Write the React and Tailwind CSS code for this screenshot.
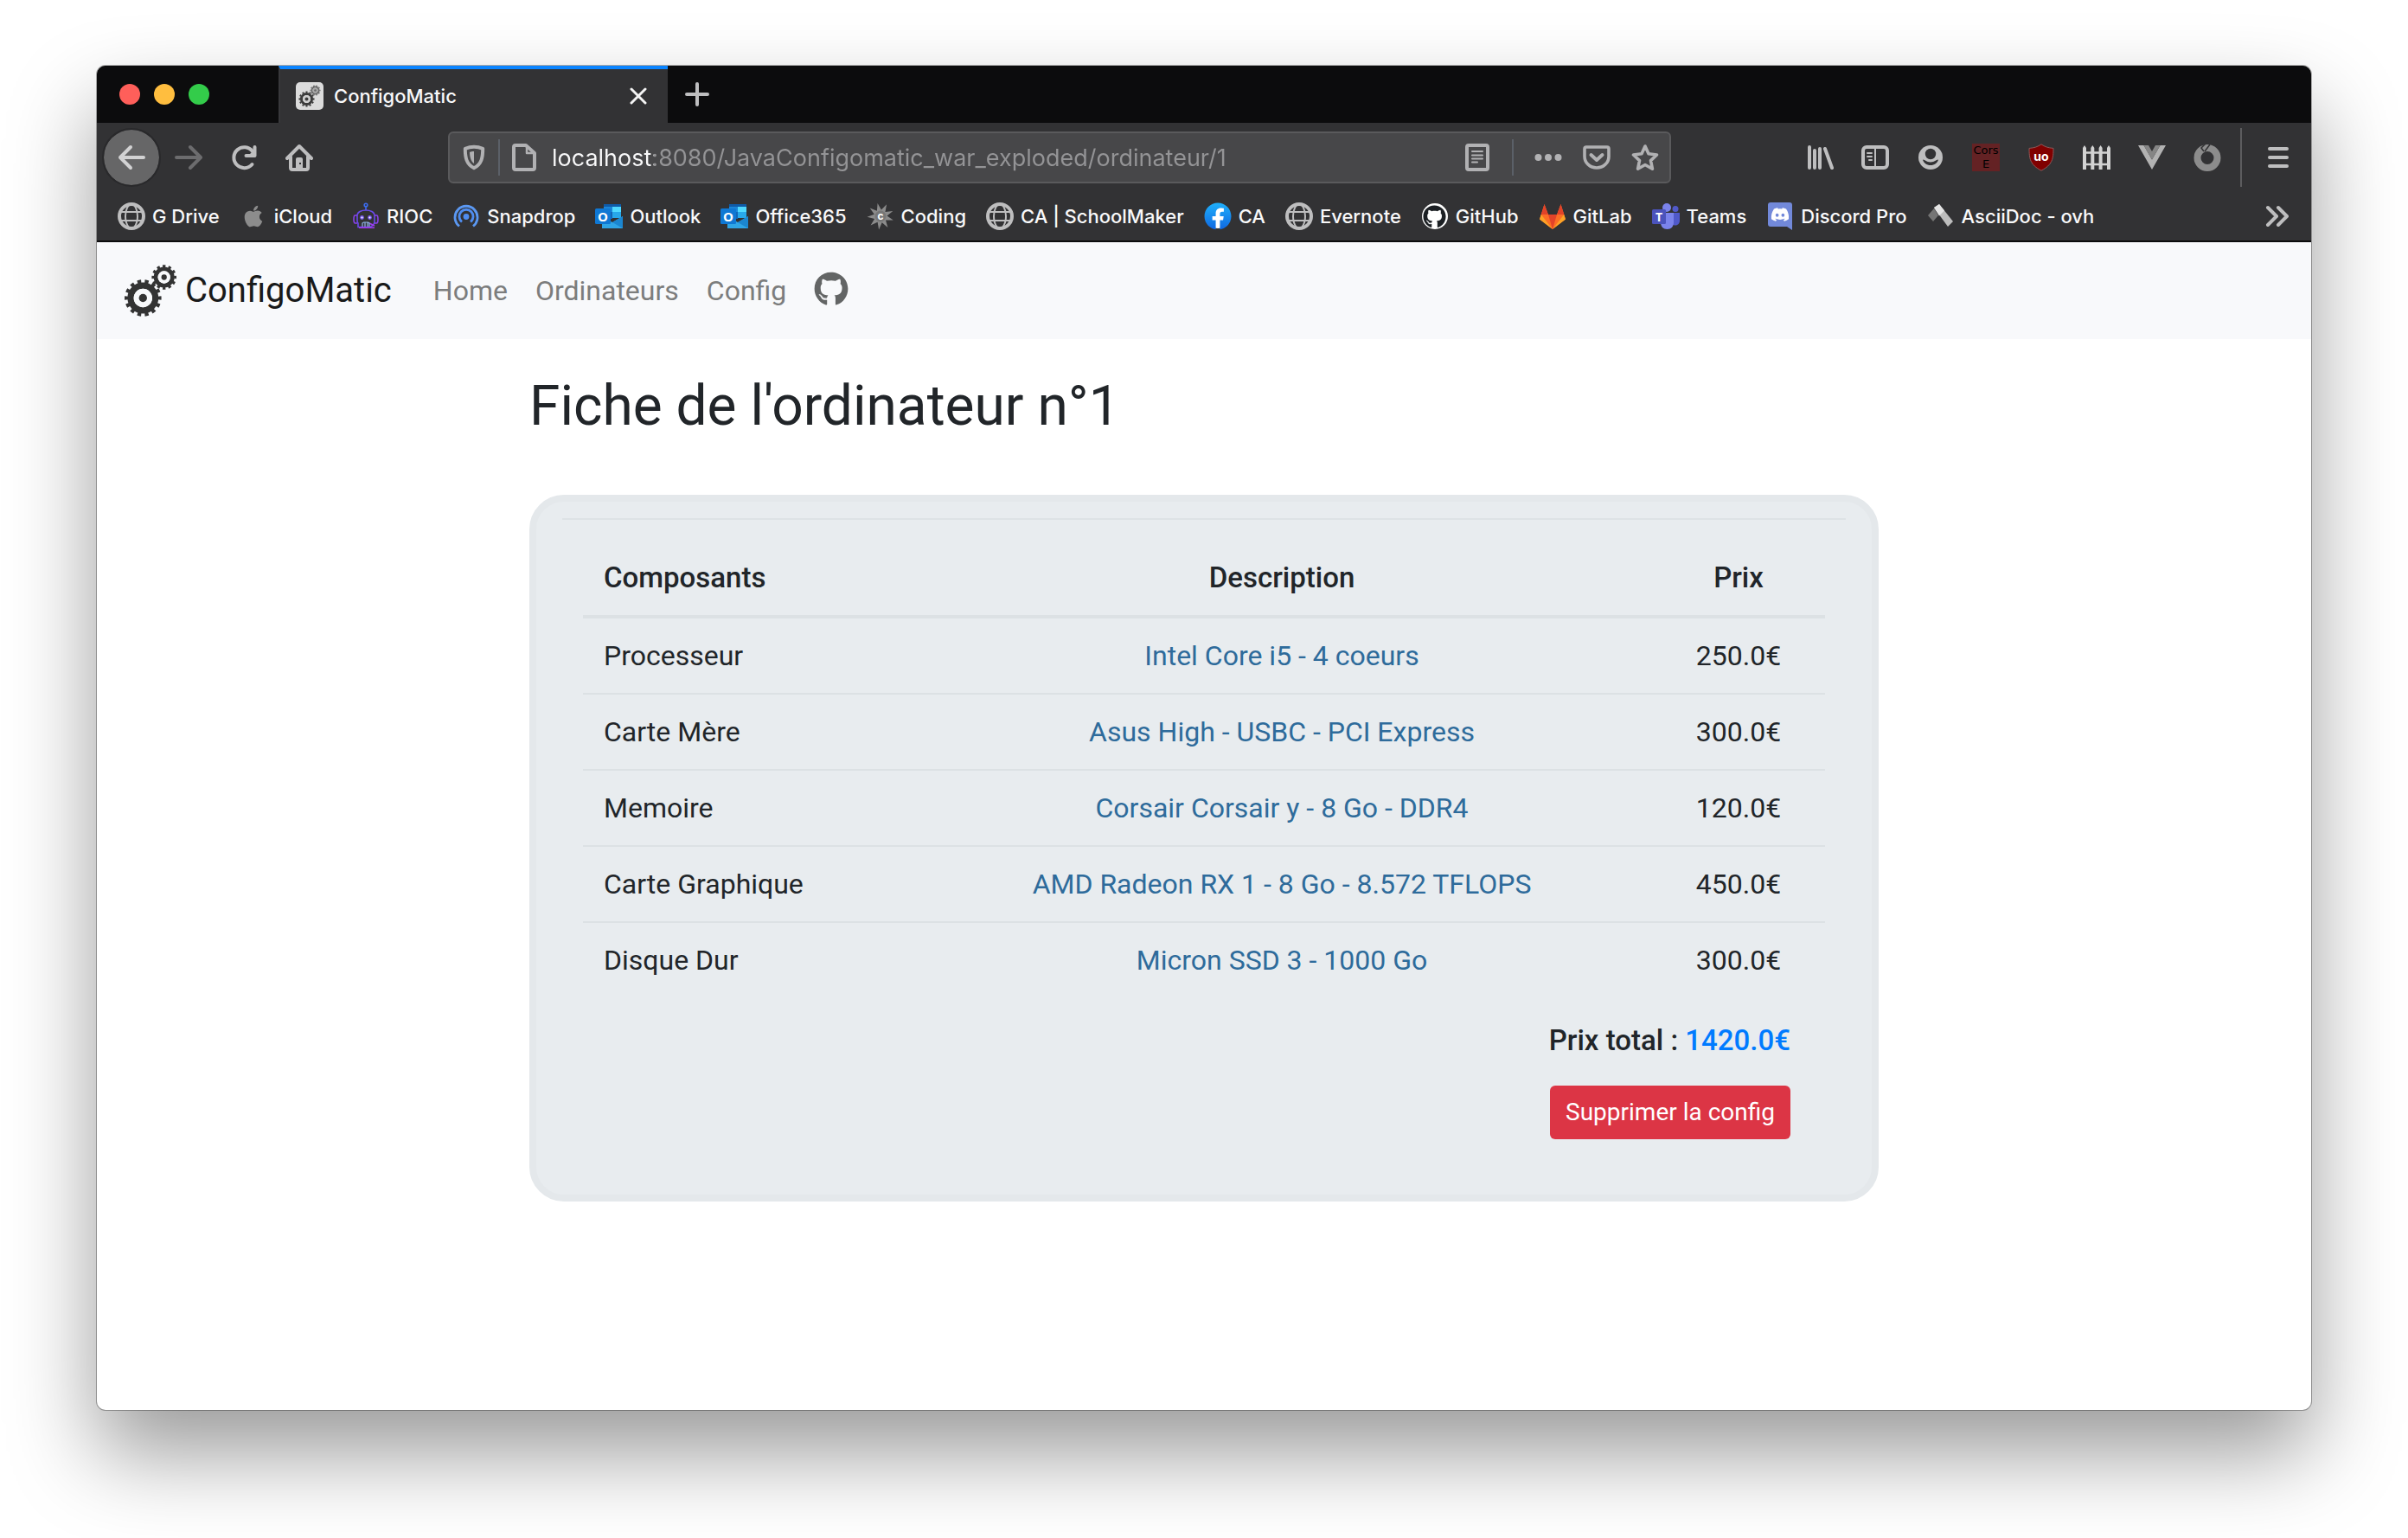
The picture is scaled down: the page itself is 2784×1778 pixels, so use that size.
import { FaApple, FaGithub, FaFacebook, FaDiscord } from "react-icons/fa";

const STROKE = {
  fill: "none",
  stroke: "currentColor",
  strokeWidth: 4,
  strokeLinecap: "round",
  strokeLinejoin: "round",
};

function Icon({ children, className = "" }) {
  return (
    <svg viewBox="0 0 32 32" className={"h-8 w-8 shrink-0 " + className} aria-hidden="true">
      {children}
    </svg>
  );
}

/* ---------- gears ---------- */

function Gear({ cx, cy, r, teeth, color, hole }) {
  return (
    <g>
      <circle
        cx={cx}
        cy={cy}
        r={r * 0.9}
        fill="none"
        stroke={color}
        strokeWidth={r * 0.2}
        pathLength={teeth * 2}
        strokeDasharray="1 1"
        strokeDashoffset="0.5"
      />
      <circle cx={cx} cy={cy} r={r * 0.67} fill="none" stroke={color} strokeWidth={r * 0.34} />
      <circle cx={cx} cy={cy} r={r * 0.5} fill={hole} />
      <circle cx={cx} cy={cy} r={r * 0.22} fill={color} />
    </g>
  );
}

function GearsLogo() {
  return (
    <svg viewBox="0 0 60 60" className="h-15 w-15 shrink-0" aria-hidden="true">
      <Gear cx={21.3} cy={38.5} r={21.3} teeth={14} color="#333333" hole="#f8f9fb" />
      <Gear cx={45.7} cy={14.5} r={14.3} teeth={12} color="#333333" hole="#f8f9fb" />
    </svg>
  );
}

function Favicon() {
  return (
    <Icon>
      <rect width="32" height="32" rx="5" fill="#dcdcdc" />
      <Gear cx={12.5} cy={19.5} r={9} teeth={12} color="#3c3c3c" hole="#cfcfcf" />
      <Gear cx={22.5} cy={9.5} r={6} teeth={10} color="#6a6a6a" hole="#a8a8a8" />
    </Icon>
  );
}

/* ---------- bookmark icons ---------- */

function Globe() {
  return (
    <Icon className="text-[#bebebf]">
      <g fill="none" stroke="currentColor">
        <circle cx="16" cy="16" r="14" strokeWidth="4" />
        <ellipse cx="16" cy="16" rx="7" ry="14" strokeWidth="2" />
        <path d="M3 11h26M3 21h26" strokeWidth="2" />
      </g>
    </Icon>
  );
}

function Apple() {
  return (
    <span className="flex h-8 w-8 items-center justify-center">
      <FaApple className="h-7 w-7 text-[#8c8c8c]" />
    </span>
  );
}

function Robot() {
  return (
    <Icon>
      <g fill="none" stroke="#5a50e8" strokeWidth="1.6">
        <circle cx="16" cy="3" r="1.8" stroke="#3b6cf0" />
        <path d="M16 5v4" stroke="#3b6cf0" />
        <path d="M6 15c0-8 20-8 20 0v7c0 3-2 5-5 6.500H7V24c-1-1-1-2-1-3z" stroke="#6a4aea" />
        <path d="M6 15H3.500c-2 0-2 9 0 9H6M26 15h2.500c2 0 2 9 0 9H26" stroke="#8a42ea" />
        <path d="M8 29.200h18M20 24l6 3" stroke="#a33bea" />
        <path d="M12 28v-4l1.500-1h5L20 24v4M15 28v-5M18 28v-5" stroke="#8fb4e8" strokeWidth="1.2" />
      </g>
      <circle cx="11.500" cy="17.500" r="2.400" fill="#7a5cf0" />
      <circle cx="20.500" cy="17.500" r="2.400" fill="#7a5cf0" />
      <circle cx="11.500" cy="17.500" r="1" fill="#ffffff" />
      <circle cx="20.500" cy="17.500" r="1" fill="#ffffff" />
    </Icon>
  );
}

function Snapdrop() {
  return (
    <Icon>
      <g fill="none" stroke="#4f8df0" strokeWidth="2.8">
        <path d="M8 27.500A13 13 0 1 1 24 27.500" stroke="#5b98f2" />
        <path d="M11 22.500A8 8 0 1 1 21 22.500" />
      </g>
      <circle cx="16" cy="16.500" r="3.400" fill="#4f8df0" />
    </Icon>
  );
}

function Outlook() {
  return (
    <Icon>
      <path d="M10 2h20v14H10z" fill="#0f5ba8" />
      <path d="M10 5h10v12H10z" fill="#1b86d8" />
      <path d="M20 5h10v6H20z" fill="#50d9ff" />
      <path d="M20 11h10v7H20z" fill="#28a8ea" />
      <path d="M10 11h10v8H10z" fill="#1266b8" />
      <path d="M8 16l12 7 12-7v14H8z" fill="#2fa5e6" />
      <path d="M20 23l12-7v14z" fill="#1b86d0" />
      <rect x="0" y="7" width="18" height="18" rx="1.500" fill="#0f78d4" />
      <text
        x="9"
        y="21.500"
        fontSize="15"
        fontWeight="700"
        textAnchor="middle"
        fill="#ffffff"
        fontFamily="Open Sans, sans-serif"
      >
        O
      </text>
    </Icon>
  );
}

const SPIKES = Array.from({ length: 18 }, (_, i) => {
  const a = (i * Math.PI) / 9 + 0.3;
  const r = i % 2 ? 7.5 : 15.5;
  return `${(16 + r * Math.cos(a)).toFixed(1)},${(16 + r * Math.sin(a)).toFixed(1)}`;
}).join(" ");

function Coding() {
  return (
    <Icon>
      <polygon points={SPIKES} fill="#8b8b8b" />
      <circle cx="16" cy="16" r="6.500" fill="#777777" />
      <text
        x="16"
        y="20"
        fontSize="12"
        fontWeight="700"
        textAnchor="middle"
        fill="#ffffff"
        fontFamily="Inter, sans-serif"
      >
        c
      </text>
    </Icon>
  );
}

function Facebook() {
  return (
    <Icon>
      <defs>
        <linearGradient id="facebook" x1="0" y1="0" x2="0" y2="1">
          <stop offset="0" stopColor="#1fb0fb" />
          <stop offset="1" stopColor="#0f68e2" />
        </linearGradient>
      </defs>
      <circle cx="16" cy="16" r="14" fill="#ffffff" />
      <FaFacebook size={32} fill="url(#facebook)" />
    </Icon>
  );
}

function GitHubMark() {
  return (
    <span className="flex h-8 w-8 items-center justify-center">
      <span className="flex h-[30px] w-[30px] items-center justify-center rounded-full bg-white">
        <FaGithub className="h-[27px] w-[27px] text-[#1b1f23]" />
      </span>
    </span>
  );
}

function GitLabMark() {
  return (
    <Icon>
      <path d="M16 31L1 19.500 6.500 2l4.500 12h10l4.500-12L31 19.500z" fill="#fc6d26" />
      <path d="M16 31L11 14h10z" fill="#e24329" />
      <path d="M6.500 2L11 14H2.800zM25.500 2L21 14h8.200z" fill="#e24329" />
      <path d="M1 19.500L2.800 14 16 31zM31 19.500L29.200 14 16 31z" fill="#fca326" />
    </Icon>
  );
}

function TeamsMark() {
  return (
    <Icon>
      <circle cx="17" cy="6" r="5" fill="#7b83eb" />
      <circle cx="27" cy="7.500" r="3.500" fill="#5059c9" />
      <path d="M22 12h10v9c0 3-2 5.500-5 5.500s-5-2-5-5z" fill="#5059c9" />
      <path d="M10 12h15v11c0 5-3 8-7.500 8S10 28 10 23z" fill="#7b83eb" />
      <rect x="0" y="8" width="16" height="17" rx="1.500" fill="#4b53bc" />
      <text
        x="8"
        y="21.500"
        fontSize="14"
        fontWeight="700"
        textAnchor="middle"
        fill="#ffffff"
        fontFamily="Open Sans, sans-serif"
      >
        T
      </text>
    </Icon>
  );
}

function DiscordMark() {
  return (
    <Icon>
      <path d="M5 0h22a3 3 0 0 1 3 3v29l-6-4H5a3 3 0 0 1-3-3V3a3 3 0 0 1 3-3z" fill="#7289da" />
      <FaDiscord x="5" y="3" size={22} fill="#ffffff" />
    </Icon>
  );
}

function AsciiDocMark() {
  return (
    <Icon>
      <path d="M1 15l7-8 5 8-6 7z" fill="#757575" />
      <path d="M8 6l6-4 16 20-6 6z" fill="#bdbdbd" />
      <path d="M8 6l6-4 6 7.500-6 6z" fill="#e4e4e4" />
    </Icon>
  );
}

const BOOKMARKS = [
  ["G Drive", Globe],
  ["iCloud", Apple],
  ["RIOC", Robot],
  ["Snapdrop", Snapdrop],
  ["Outlook", Outlook],
  ["Office365", Outlook],
  ["Coding", Coding],
  ["CA | SchoolMaker", Globe],
  ["CA", Facebook],
  ["Evernote", Globe],
  ["GitHub", GitHubMark],
  ["GitLab", GitLabMark],
  ["Teams", TeamsMark],
  ["Discord Pro", DiscordMark],
  ["AsciiDoc - ovh", AsciiDocMark],
];

/* ---------- browser chrome ---------- */

function TabStrip() {
  return (
    <div className="flex h-[66px] items-stretch bg-[#0c0c0d]">
      <div className="flex items-center gap-4 pr-20 pl-[26px]">
        <button aria-label="Fermer la fenêtre" className="h-6 w-6 rounded-full bg-[#ff5f5a]" />
        <button aria-label="Réduire" className="h-6 w-6 rounded-full bg-[#ffbe3f]" />
        <button aria-label="Agrandir" className="h-6 w-6 rounded-full bg-[#33cc4a]" />
      </div>
      <div className="flex w-[450px] items-center border-t-4 border-l-2 border-t-[#0a84ff] border-l-[#38383b] bg-[#323234] pr-6 pl-[18px]">
        <Favicon />
        <span className="ml-3 flex-1 text-[22px] font-medium text-[#f9f9fa]">ConfigoMatic</span>
        <button aria-label="Fermer l'onglet" className="h-5 w-5 text-[#f4f4f4]">
          <svg viewBox="0 0 20 20" className="h-5 w-5">
            <path d="M2 2l16 16M18 2L2 18" stroke="currentColor" strokeWidth="3" strokeLinecap="round" />
          </svg>
        </button>
      </div>
      <button aria-label="Nouvel onglet" className="ml-5 text-[#bebebf]">
        <svg viewBox="0 0 28 28" className="h-7 w-7">
          <path d="M14 2v24M2 14h24" stroke="currentColor" strokeWidth="4" strokeLinecap="round" />
        </svg>
      </button>
    </div>
  );
}

function ToolButton({ label, children, className = "text-[#bebebf]" }) {
  return (
    <button aria-label={label} className={"flex h-16 w-16 shrink-0 items-center justify-center " + className}>
      {children}
    </button>
  );
}

function UrlBar() {
  return (
    <div className="mx-[140px] flex h-15 flex-1 items-center rounded-md border-2 border-[#5a5a5c] bg-[#474749] px-3 text-[#b1b1b3]">
      <Icon>
        <path
          d="M16 3.800c4 0 7.200.8 10.200 2 0 10-1.200 18-10.200 22.400C7 23.800 5.800 15.800 5.800 5.800c3-1.200 6.200-2 10.200-2z"
          {...STROKE}
        />
        <path d="M16 9c-2 0-3.600.4-5 1 .2 6 1.400 10.400 5 13z" fill="currentColor" />
      </Icon>
      <span className="mx-3 h-[42px] w-0.5 bg-[#5b6068]" />
      <Icon>
        <path d="M6 2h12l10 9v17a2 2 0 0 1-2 2H6a2 2 0 0 1-2-2V4a2 2 0 0 1 2-2z" {...STROKE} />
        <path d="M19 3v8h8" {...STROKE} strokeWidth="2.500" />
      </Icon>
      <input
        aria-label="Adresse"
        defaultValue="localhost:8080/JavaConfigomatic_war_exploded/ordinateur/1"
        className="ml-4 h-14 min-w-0 flex-1 bg-[linear-gradient(to_right,#f9f9fa_118px,#949496_118px)] bg-clip-text text-[27px] text-transparent outline-none"
      />
      <Icon>
        <rect x="4" y="2" width="24" height="28" rx="2" {...STROKE} />
        <path d="M10 9h12M10 13.500h12M10 17.500h12M10 21.500h6" {...STROKE} strokeWidth="2" />
      </Icon>
      <span className="mx-6 h-[42px] w-0.5 bg-[#5b6068]" />
      <div className="flex gap-6">
        <Icon>
          <circle cx="4.500" cy="16" r="4" fill="currentColor" />
          <circle cx="16" cy="16" r="4" fill="currentColor" />
          <circle cx="27.500" cy="16" r="4" fill="currentColor" />
        </Icon>
        <Icon>
          <path d="M4 4h24a2 2 0 0 1 2 2v9a14 13 0 0 1-28 0V6a2 2 0 0 1 2-2z" {...STROKE} strokeWidth="3.600" />
          <path d="M9.500 13l6.500 6 6.500-6" {...STROKE} />
        </Icon>
        <Icon>
          <path
            d="M16 3l4 8.800 9.500 1.200-7 6.600 1.900 9.600L16 24.500l-8.400 4.700 1.900-9.600-7-6.600 9.500-1.200z"
            {...STROKE}
            strokeWidth="3.600"
          />
        </Icon>
      </div>
    </div>
  );
}

function Extensions() {
  return (
    <div className="flex items-center">
      <ToolButton label="Bibliothèque">
        <Icon>
          <path d="M4 4v24M10 8v20M16 6v22M22 6l8 22" {...STROKE} />
        </Icon>
      </ToolButton>
      <ToolButton label="Panneau latéral">
        <Icon>
          <rect x="2" y="4" width="28" height="24" rx="4" {...STROKE} />
          <path d="M16 4v24" stroke="currentColor" strokeWidth="2" />
          <path d="M7 11h5M7 15h5M9 19h3" {...STROKE} strokeWidth="2" />
        </Icon>
      </ToolButton>
      <ToolButton label="Compte">
        <Icon>
          <circle cx="16" cy="16" r="14" fill="currentColor" />
          <circle cx="16" cy="12" r="6.200" fill="#323234" />
          <path d="M7 18.500c3 0 4 3 9 3s6-3 9-3c-1 4-4.500 6.500-9 6.500s-8-2.500-9-6.500z" fill="#323234" />
        </Icon>
      </ToolButton>
      <ToolButton label="Cors Everywhere" className="text-black">
        <span className="h-8 w-8 bg-[#642224] text-center font-['DejaVu_Sans'] text-[13px] leading-4">
          Cors E
        </span>
      </ToolButton>
      <ToolButton label="uBlock Origin">
        <Icon>
          <path
            d="M16 .8c4 2.800 8 4.200 14 4.600 0 12-1 19-14 25.800C3 24.400 2 17.400 2 5.400 8 5 12 3.600 16 .8z"
            fill="#800000"
            stroke="#8c5a5a"
            strokeWidth="1"
          />
          <text
            x="16"
            y="19.500"
            fontSize="14"
            fontWeight="700"
            textAnchor="middle"
            fill="#ffffff"
            fontFamily="Inter, sans-serif"
          >
            uo
          </text>
        </Icon>
      </ToolButton>
      <ToolButton label="Clôture" className="text-[#d2d2d2]">
        <Icon>
          <path
            d="M0 30V5l2-3 2 3v25zM9.300 30V5l2-3 2 3v25zM18.600 30V5l2-3 2 3v25zM28 30V5l2-3 2 3v25z"
            fill="currentColor"
          />
          <path d="M0 10.500h32M0 24h32" stroke="currentColor" strokeWidth="2.600" />
        </Icon>
      </ToolButton>
      <ToolButton label="Vue">
        <Icon>
          <path d="M0 2h6.500L16 18.500 25.500 2H32L16 30z" fill="#b2b2b2" />
          <path d="M6.500 2H12l4 7 4-7h5.500L16 18.500z" fill="#858585" />
        </Icon>
      </ToolButton>
      <ToolButton label="Anneau" className="text-[#8c8c8c]">
        <Icon>
          <circle cx="16" cy="16.500" r="11.500" fill="none" stroke="currentColor" strokeWidth="8" />
          <path d="M14 0L9 5l3 4M19 1l-6 8" fill="none" stroke="#323234" strokeWidth="1.500" />
        </Icon>
      </ToolButton>
      <span className="mr-2.5 ml-1.5 h-[68px] w-0.5 bg-[#5c5c5e]" />
      <ToolButton label="Menu">
        <Icon>
          <path d="M6 6h20M6 16h20M6 26h20" {...STROKE} />
        </Icon>
      </ToolButton>
    </div>
  );
}

function NavRow() {
  return (
    <div className="flex h-20 items-center pr-1.5 pl-2">
      <ToolButton
        label="Page précédente"
        className="mr-0.5 rounded-full bg-[#666667] text-[#d2d2d3] outline-2 outline-[#29292b]"
      >
        <Icon>
          <path d="M30 16H3M15 4L3 16l12 12" {...STROKE} />
        </Icon>
      </ToolButton>
      <ToolButton label="Page suivante" className="text-[#6c6c6e]">
        <Icon>
          <path d="M2 16h27M18 4l12 12-12 12" {...STROKE} />
        </Icon>
      </ToolButton>
      <ToolButton label="Actualiser">
        <Icon>
          <path d="M25.500 24A12 12 0 1 1 26 9" {...STROKE} />
          <path d="M28.500 4v10h-10" {...STROKE} />
          <path d="M22 13l6-6v6z" fill="currentColor" />
        </Icon>
      </ToolButton>
      <ToolButton label="Accueil">
        <Icon>
          <path d="M2 17L16 3l14 14M6 15v13a2 2 0 0 0 2 2h16a2 2 0 0 0 2-2V15" {...STROKE} />
          <path d="M12 30V18a2 2 0 0 1 2-2h4a2 2 0 0 1 2 2v12z" fill="currentColor" />
          <rect x="16" y="22" width="2" height="2" fill="#323234" />
        </Icon>
      </ToolButton>
      <UrlBar />
      <Extensions />
    </div>
  );
}

function BookmarksBar() {
  return (
    <div className="flex h-14 items-center justify-between pr-6 pl-6">
      <nav aria-label="Marque-pages" className="flex items-center gap-[23px]">
        {BOOKMARKS.map(([label, Mark]) => (
          <a
            key={label}
            href="#"
            className="flex items-center gap-2 text-[22px] font-medium whitespace-nowrap text-[#f9f9fa]"
          >
            <Mark />
            {label}
          </a>
        ))}
      </nav>
      <button aria-label="Plus de marque-pages" className="text-[#bebebf]">
        <Icon>
          <path d="M6 6l10 10L6 26M18 6l10 10-10 10" {...STROKE} />
        </Icon>
      </button>
    </div>
  );
}

/* ---------- page ---------- */

function Navbar() {
  return (
    <header className="flex h-28 items-center bg-[#f8f9fb] px-8">
      <a href="#" className="mr-8 flex items-center gap-2.5 text-[40px] text-[#191a1a]">
        <GearsLogo />
        ConfigoMatic
      </a>
      <nav className="flex items-center text-[32px] text-[#7c7d7d]">
        <a href="#" className="px-4">Home</a>
        <a href="#" className="px-4">Ordinateurs</a>
        <a href="#" className="px-4">Config</a>
        <a href="#" className="px-4 pb-1" aria-label="GitHub">
          <FaGithub className="h-10 w-10 text-[#636565]" />
        </a>
      </nav>
    </header>
  );
}

const PARTS = [
  ["Processeur", "Intel Core i5 - 4 coeurs", "250.0€"],
  ["Carte Mère", "Asus High - USBC - PCI Express", "300.0€"],
  ["Memoire", "Corsair Corsair y - 8 Go - DDR4", "120.0€"],
  ["Carte Graphique", "AMD Radeon RX 1 - 8 Go - 8.572 TFLOPS", "450.0€"],
  ["Disque Dur", "Micron SSD 3 - 1000 Go", "300.0€"],
];

function PartsTable() {
  return (
    <table className="w-full table-fixed border-separate border-spacing-0 text-center">
      <thead className="text-[33px]">
        <tr>
          <th className="h-[90px] w-[380px] border-b-4 border-[#dce1e4] px-6 text-left font-medium">Composants</th>
          <th className="border-b-4 border-[#dce1e4] font-medium">Description</th>
          <th className="w-[200px] border-b-4 border-[#dce1e4] font-medium">Prix</th>
        </tr>
      </thead>
      <tbody>
        {PARTS.map(([part, description, price]) => (
          <tr key={part} className="*:h-[88px] *:border-b-2 *:border-[#dce1e4] last:*:h-[86px] last:*:border-b-0">
            <td className="px-6 text-left">{part}</td>
            <td>
              <a href="#" className="text-[#2e6b9b]">{description}</a>
            </td>
            <td>{price}</td>
          </tr>
        ))}
      </tbody>
    </table>
  );
}

export default function App() {
  return (
    <div className="flex min-h-screen flex-col bg-white px-28 pt-[76px] pb-[148px] font-[Inter,sans-serif]">
      <div className="flex flex-1 flex-col overflow-hidden rounded-[10px] bg-white shadow-[0_0_0_1px_rgba(0,0,0,0.3),0_50px_100px_rgba(0,0,0,0.4)]">
        <div className="border-b-2 border-[#0c0c0d] bg-[#323234]">
          <TabStrip />
          <NavRow />
          <BookmarksBar />
        </div>
        <div className="flex-1 font-[Roboto,sans-serif] text-[32px] text-[#212529]">
          <Navbar />
          <main className="mx-auto max-w-[1560px] pt-10">
            <h1 className="mb-16 text-[64px] leading-[76px]">Fiche de l'ordinateur n°1</h1>
            <section className="rounded-[40px] border-8 border-[#e4e8eb] bg-[#e8ecef] px-[30px] pt-[19px] pb-16">
              <hr className="mb-6 border-t-2 border-[#dde2e5]" />
              <div className="px-6">
                <PartsTable />
                <div className="mt-[26px] flex justify-end pr-10">
                  <div className="flex flex-col items-end gap-7">
                    <p className="text-[33px] leading-[48px] font-medium">
                      Prix total : <span className="text-[#007bff]">1420.0€</span>
                    </p>
                    <button className="h-[62px] rounded-md bg-[#dc3545] px-[18px] text-[28px] text-white">
                      Supprimer la config
                    </button>
                  </div>
                </div>
              </div>
            </section>
          </main>
        </div>
      </div>
    </div>
  );
}
